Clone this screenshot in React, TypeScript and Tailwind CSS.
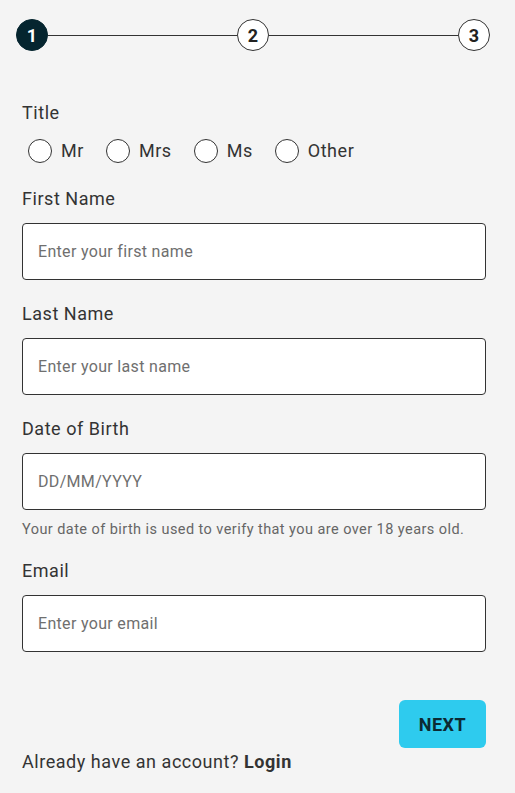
const titles = ['Mr', 'Mrs', 'Ms', 'Other'];

function Step({ n, active }: { n: number; active?: boolean }) {
  return (
    <div
      className={`w-8 h-8 shrink-0 rounded-full flex items-center justify-center text-[18px] font-bold border ${
        active ? 'bg-[#05252f] border-[#05252f] text-white' : 'bg-white border-[#333] text-[#222]'
      }`}
    >
      {n}
    </div>
  );
}

function Field({ label, placeholder, help }: { label: string; placeholder: string; help?: string }) {
  return (
    <div className="flex flex-col">
      <label className="text-[18px] leading-6 tracking-[0.03em] text-[#333]">{label}</label>
      <input
        className="mt-[12px] h-[57px] w-full rounded-[4px] border border-[#333] bg-white px-[15px] text-[16px] tracking-[0.02em] text-[#333] placeholder:text-[#6f6f6f] outline-none"
        placeholder={placeholder}
      />
      {help && <p className="mt-[10px] text-[14.5px] leading-5 tracking-[0.03em] text-[#666]">{help}</p>}
    </div>
  );
}

export default function App() {
  return (
    <div className="min-h-[793px] w-[515px] bg-[#f4f4f4] font-['Roboto',sans-serif] text-[#333]">
      <div className="flex items-center pl-4 pr-[25px] pt-[19px]">
        <Step n={1} active />
        <div className="h-px flex-1 bg-[#333]" />
        <Step n={2} />
        <div className="h-px flex-1 bg-[#333]" />
        <Step n={3} />
      </div>

      <div className="pl-[22px] pr-[29px] pt-[50px]">
        <div className="text-[18px] leading-6 tracking-[0.03em]">Title</div>
        <div className="mt-[14px] flex items-center pl-[6px]">
          {titles.map((t) => (
            <label key={t} className="mr-[22px] flex items-center gap-[9px] text-[18px] leading-6 tracking-[0.03em]">
              <span className="h-6 w-6 rounded-full border border-[#333] bg-white" />
              {t}
            </label>
          ))}
        </div>

        <div className="mt-[24px] flex flex-col gap-[22px]">
          <Field label="First Name" placeholder="Enter your first name" />
          <Field label="Last Name" placeholder="Enter your last name" />
          <Field
            label="Date of Birth"
            placeholder="DD/MM/YYYY"
            help="Your date of birth is used to verify that you are over 18 years old."
          />
        </div>
        <div className="mt-[19px]">
          <Field label="Email" placeholder="Enter your email" />
        </div>

        <div className="mt-[48px] flex justify-end">
          <button className="h-12 w-[87px] rounded-md bg-[#2ecbee] text-[18px] font-bold tracking-[0.03em] text-[#0c2a33]">
            NEXT
          </button>
        </div>
        <p className="mt-[2px] text-[18px] leading-6 tracking-[0.03em] text-[#333]">
          Already have an account? <span className="font-bold">Login</span>
        </p>
      </div>
    </div>
  );
}
